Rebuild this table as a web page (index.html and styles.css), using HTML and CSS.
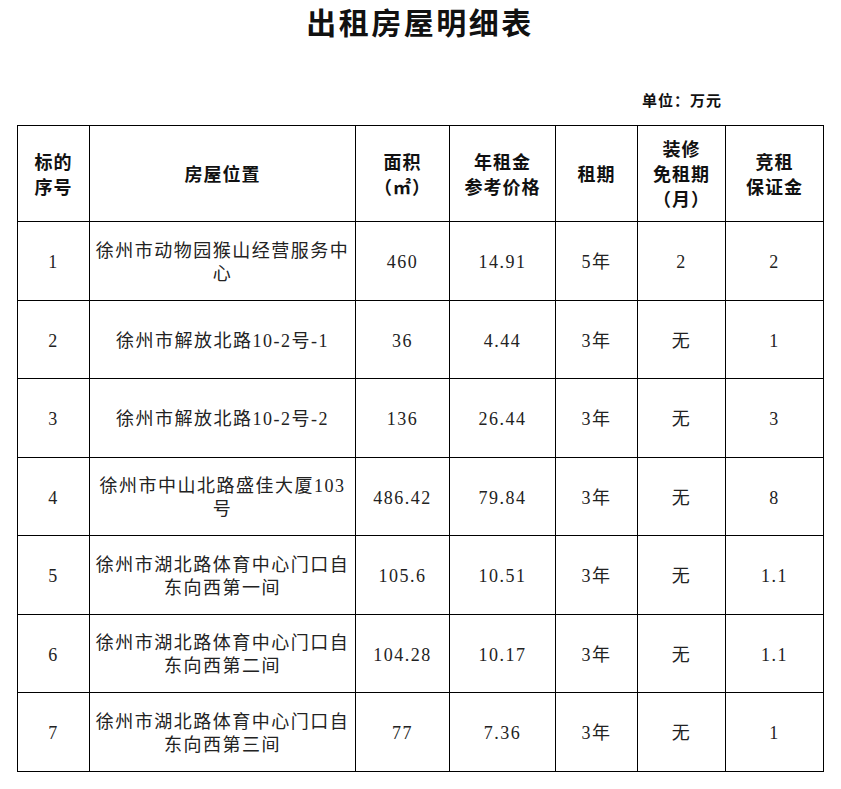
FILE: index.html
```html
<!DOCTYPE html>
<html lang="zh-CN">
<head>
<meta charset="utf-8">
<title>出租房屋明细表</title>
<link rel="stylesheet" href="styles.css">
</head>
<body>
<div class="page">
  <h1 class="title">出租房屋明细表</h1>
  <div class="unit">单位：万元</div>
  <table class="grid">
    <colgroup>
      <col class="c1"><col class="c2"><col class="c3"><col class="c4"><col class="c5"><col class="c6"><col class="c7">
    </colgroup>
    <thead>
      <tr>
        <th>标的<br>序号</th>
        <th>房屋位置</th>
        <th>面积<br>（㎡）</th>
        <th>年租金<br>参考价格</th>
        <th>租期</th>
        <th>装修<br>免租期<br>（月）</th>
        <th>竞租<br>保证金</th>
      </tr>
    </thead>
    <tbody>
      <tr>
        <td>1</td><td class="addr">徐州市动物园猴山经营服务中<br>心</td><td>460</td><td>14.91</td><td>5年</td><td>2</td><td>2</td>
      </tr>
      <tr>
        <td>2</td><td class="addr">徐州市解放北路10-2号-1</td><td>36</td><td>4.44</td><td>3年</td><td>无</td><td>1</td>
      </tr>
      <tr>
        <td>3</td><td class="addr">徐州市解放北路10-2号-2</td><td>136</td><td>26.44</td><td>3年</td><td>无</td><td>3</td>
      </tr>
      <tr>
        <td>4</td><td class="addr">徐州市中山北路盛佳大厦103<br>号</td><td>486.42</td><td>79.84</td><td>3年</td><td>无</td><td>8</td>
      </tr>
      <tr>
        <td>5</td><td class="addr">徐州市湖北路体育中心门口自<br>东向西第一间</td><td>105.6</td><td>10.51</td><td>3年</td><td>无</td><td>1.1</td>
      </tr>
      <tr>
        <td>6</td><td class="addr">徐州市湖北路体育中心门口自<br>东向西第二间</td><td>104.28</td><td>10.17</td><td>3年</td><td>无</td><td>1.1</td>
      </tr>
      <tr>
        <td>7</td><td class="addr">徐州市湖北路体育中心门口自<br>东向西第三间</td><td>77</td><td>7.36</td><td>3年</td><td>无</td><td>1</td>
      </tr>
    </tbody>
  </table>
</div>
</body>
</html>
```
FILE: styles.css
```css
html, body {
  margin: 0;
  padding: 0;
  background: #ffffff;
}

.page {
  width: 841px;
  padding: 3px 0 0 17px;
  box-sizing: border-box;
  font-family: "Liberation Serif", "Noto Sans CJK SC", serif;
  color: #222;
}

.title {
  margin: 0;
  width: 806px;
  text-align: center;
  font-family: "Noto Sans CJK SC", sans-serif;
  font-size: 30px;
  line-height: 36px;
  font-weight: 700;
  letter-spacing: 2.5px;
  color: #111;
}

.unit {
  width: 806px;
  box-sizing: border-box;
  margin-top: 51px;
  padding-right: 101px;
  text-align: right;
  font-family: "Noto Sans CJK SC", sans-serif;
  font-size: 15px;
  line-height: 20px;
  font-weight: 700;
  letter-spacing: 1px;
  color: #111;
}

.grid {
  margin-top: 15px;
  width: 806px;
  border-collapse: collapse;
  table-layout: fixed;
}

.c1 { width: 72px; }
.c2 { width: 266px; }
.c3 { width: 94px; }
.c4 { width: 106px; }
.c5 { width: 82px; }
.c6 { width: 88px; }
.c7 { width: 98px; }

.grid th,
.grid td {
  border: 1px solid #000;
  padding: 0 2px;
  text-align: center;
  vertical-align: middle;
}

.grid th {
  height: 95px;
  font-family: "Noto Sans CJK SC", sans-serif;
  font-size: 18px;
  line-height: 25px;
  font-weight: 700;
  letter-spacing: 1px;
  color: #111;
}

.grid td {
  height: 73.5px;
  padding-top: 4px;
  font-size: 18px;
  line-height: 23px;
  letter-spacing: 1.5px;
  color: #222;
}

.grid td.addr {
  padding-left: 1px;
  padding-right: 1px;
}
```
